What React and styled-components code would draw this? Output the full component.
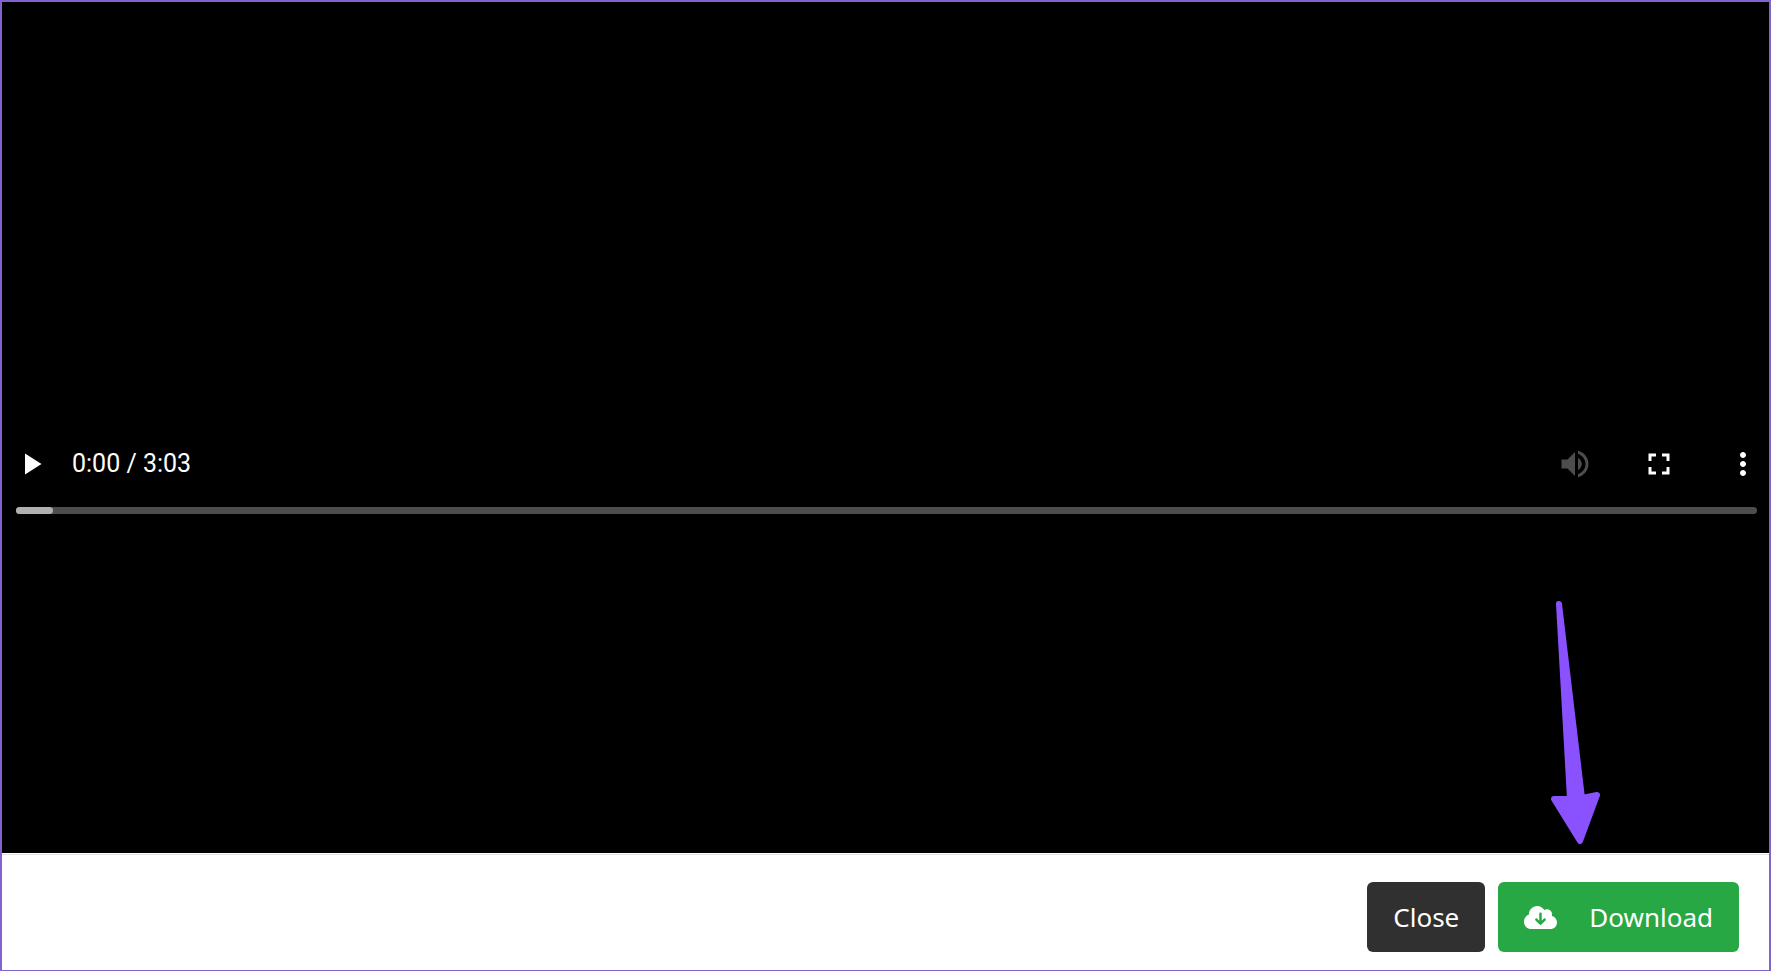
import React from 'react';
import styled, { createGlobalStyle } from 'styled-components';
import { FaCloudArrowDown } from 'react-icons/fa6';

const GlobalStyle = createGlobalStyle`
    * {
        box-sizing: border-box;
    }

    body {
        margin: 0;
        background: #fff;
    }
`;

const Modal = styled.div`
    display: flex;
    flex-direction: column;
    min-height: 100vh;
    border: 2px solid #8163cf;
    border-bottom-width: 1px;
    background: #fff;
    font-family: 'Noto Sans', 'Open Sans', sans-serif;
`;

const Player = styled.section`
    position: relative;
    flex: 1;
    display: flex;
    flex-direction: column;
    background: #000;
`;

const Space = styled.div`
    flex: ${props => props.$grow};
`;

const Controls = styled.div`
    display: flex;
    align-items: center;
    gap: 48px;
    height: 52px;
    padding: 0 8px 0 11px;
`;

const IconButton = styled.button`
    display: flex;
    padding: 0;
    border: none;
    background: none;
    color: ${props => (props.$muted ? '#4d4d4d' : '#fff')};
    cursor: pointer;

    svg {
        width: 36px;
        height: 36px;
        fill: currentColor;
    }
`;

const Time = styled.span`
    flex: 1;
    margin-left: -25px;
    color: #fff;
    font-family: Roboto, sans-serif;
    font-size: 25px;
    line-height: 32px;
`;

const Timeline = styled.div`
    height: 7px;
    margin: 17px 12px 0 14px;
    border-radius: 4px;
    background: #4d4d4d;
`;

const Buffered = styled.div`
    height: 100%;
    border-radius: 4px;
    background: #b0b0b0;
`;

const Arrow = styled.svg`
    position: absolute;
    right: 165px;
    bottom: 7px;
    width: 54px;
    height: 248px;
    fill: #8a52ff;
    stroke: #8a52ff;
    stroke-width: 6;
    stroke-linejoin: round;
`;

const Footer = styled.footer`
    display: flex;
    justify-content: flex-end;
    gap: 13px;
    margin-top: 1px;
    padding: 27px 30px 18px;
    border-top: 1px solid #dee2e6;
`;

const Button = styled.button`
    display: flex;
    align-items: center;
    gap: 32px;
    height: 70px;
    padding: 0 26px;
    border: none;
    border-radius: 6px;
    background: ${props => (props.$primary ? '#28a745' : '#303030')};
    color: #fff;
    font-family: inherit;
    font-size: 26px;
    line-height: 40px;
    cursor: pointer;
`;

const icons = {
    play: 'M8 5v14l11-7z',
    volume:
        'M3 9v6h4l5 5V4L7 9H3zm13.5 3c0-1.77-1.02-3.29-2.5-4.03v8.05c1.48-.73 2.5-2.25 2.5-4.02zM14 3.23v2.06c2.89.86 5 3.54 5 6.71s-2.11 5.85-5 6.71v2.06c4.01-.91 7-4.49 7-8.77s-2.99-7.86-7-8.77z',
    fullscreen:
        'M7 14H5v5h5v-2H7v-3zm-2-4h2V7h3V5H5v5zm12 7h-3v2h5v-5h-2v3zM14 5v2h3v3h2V5h-5z',
    more: 'M12 8c1.1 0 2-.9 2-2s-.9-2-2-2-2 .9-2 2 .9 2 2 2zm0 2c-1.1 0-2 .9-2 2s.9 2 2 2 2-.9 2-2-.9-2-2-2zm0 6c-1.1 0-2 .9-2 2s.9 2 2 2 2-.9 2-2-.9-2-2-2z'
};

function Control({ icon, label, ...props }) {
    return (
        <IconButton type="button" aria-label={label} {...props}>
            <svg viewBox="0 0 24 24" aria-hidden="true">
                <path d={icons[icon]} />
            </svg>
        </IconButton>
    );
}

export default function App() {
    const buffered = 2.1;

    return (
        <>
            <GlobalStyle />
            <Modal>
                <Player>
                    <Space $grow={9} />
                    <Controls>
                        <Control icon="play" label="Play" />
                        <Time>0:00 / 3:03</Time>
                        <Control icon="volume" label="Mute" $muted />
                        <Control icon="fullscreen" label="Full screen" />
                        <Control icon="more" label="More options" />
                    </Controls>
                    <Timeline>
                        <Buffered style={{ width: `${buffered}%` }} />
                    </Timeline>
                    <Space $grow={7} />
                    <Arrow viewBox="0 0 54 248" aria-hidden="true">
                        <path d="M9 6 L20 201 L4 201 L30 243 L47 197 L32 200 Z" />
                    </Arrow>
                </Player>
                <Footer>
                    <Button type="button">Close</Button>
                    <Button type="button" $primary>
                        <FaCloudArrowDown size={33} aria-hidden="true" />
                        Download
                    </Button>
                </Footer>
            </Modal>
        </>
    );
}
